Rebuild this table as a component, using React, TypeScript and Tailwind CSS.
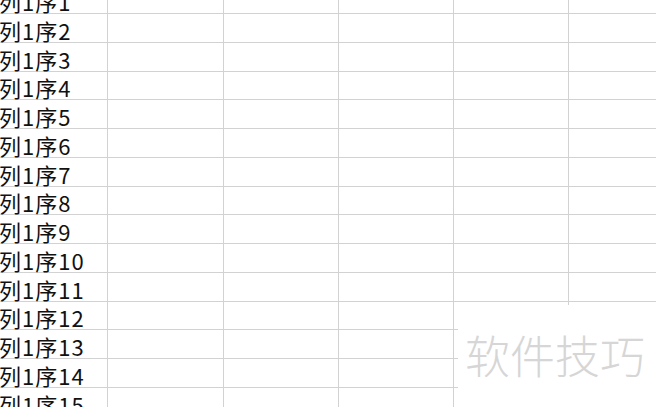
const rowHeights = [
  "h-[29px]", "h-[29px]", "h-[29px]", "h-[28px]", "h-[29px]",
  "h-[29px]", "h-[29px]", "h-[28px]", "h-[29px]", "h-[29px]",
  "h-[29px]", "h-[28px]", "h-[29px]", "h-[29px]", "h-[29px]",
]

const rows = rowHeights.map((h, i) => ({ label: `列1序${i + 1}`, h }))

export default function App() {
  return (
    <div className="relative w-[656px] h-[407px] overflow-hidden bg-white font-['Noto_Sans_CJK_SC',sans-serif]">
      <div className="mt-[-15px] flex flex-col">
        {rows.map((row) => (
          <div key={row.label} className={`flex border-b border-[#d2d2d2] ${row.h}`}>
            <div className="w-[108px] shrink-0 border-r border-[#d2d2d2] flex items-end">
              <span className="ml-[-1px] text-[22px] tracking-[1px] leading-[24px] text-[#111] whitespace-nowrap">
                {row.label}
              </span>
            </div>
            <div className="w-[116px] shrink-0 border-r border-[#d2d2d2]" />
            <div className="w-[115px] shrink-0 border-r border-[#d2d2d2]" />
            <div className="w-[115px] shrink-0 border-r border-[#d2d2d2]" />
            <div className="w-[115px] shrink-0 border-r border-[#d2d2d2]" />
            <div className="flex-1" />
          </div>
        ))}
      </div>

      {/* watermark */}
      <div className="absolute left-[458px] top-[305px] right-0 bottom-0 bg-white flex items-start">
        <span className="mt-[22px] ml-[7px] text-[45px] leading-[56px] font-light text-[#d6d6d6] whitespace-nowrap">
          软件技巧
        </span>
      </div>
    </div>
  )
}
